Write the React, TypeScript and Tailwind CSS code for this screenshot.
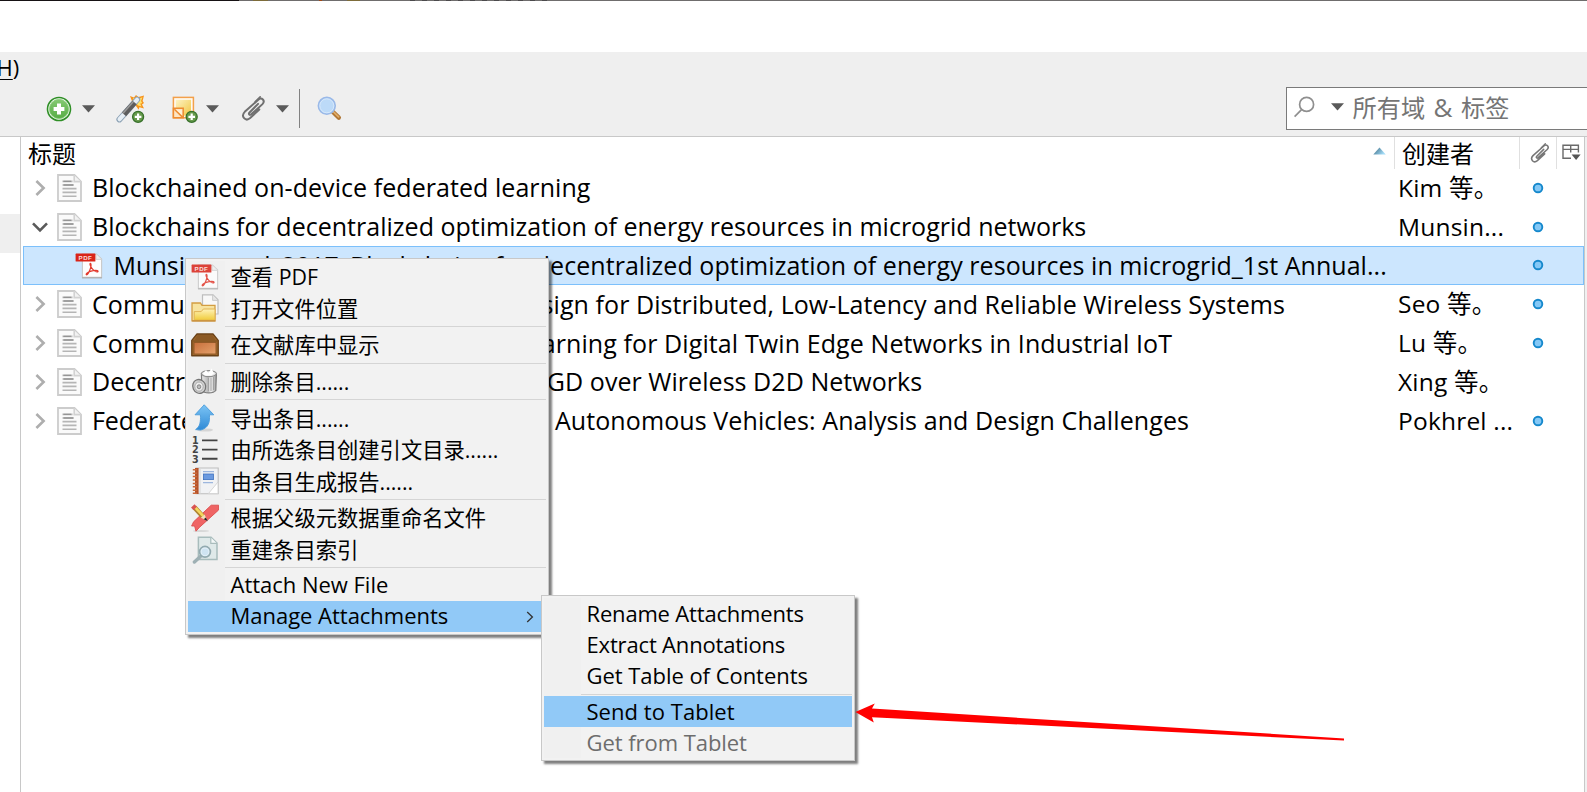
import React from 'react';

const latin = "font-['Open_Sans','Noto_Sans_CJK_SC',sans-serif]";

function Caret({ className = '' }: { className?: string }) {
  return (
    <svg className={'shrink-0 ' + className} width="13" height="8" viewBox="0 0 13 8">
      <path d="M0 0.3H13L6.5 7.6Z" fill="#5a5a5a" />
    </svg>
  );
}

function PlusBadge() {
  return (
    <g>
      <circle cx="21.5" cy="21.5" r="5.5" fill="#679b4c" stroke="#37702a" strokeWidth="1.3" />
      <path d="M21.5 18.2v6.6M18.2 21.5h6.6" stroke="#fff" strokeWidth="2.2" />
    </g>
  );
}

function AddIcon() {
  return (
    <svg width="26" height="26" viewBox="0 0 26 26" className="shrink-0">
      <defs>
        <linearGradient id="add" x1="0" y1="0" x2="0" y2="1">
          <stop offset="0" stopColor="#85c973" />
          <stop offset="1" stopColor="#57ad45" />
        </linearGradient>
      </defs>
      <circle cx="13" cy="13" r="11.5" fill="#fff" stroke="#2f8f26" strokeWidth="1.6" />
      <circle cx="13" cy="13" r="9.7" fill="url(#add)" stroke="#8dcf7e" strokeWidth="0.8" />
      <path d="M13 7.6v10.8M7.6 13h10.8" stroke="#fff" strokeWidth="4" />
    </svg>
  );
}

function WandIcon() {
  return (
    <svg width="29" height="28" viewBox="0 0 29 28" className="shrink-0">
      <path d="M14 1l4 1.6L20 0l2.4 2L28 .6 26.6 6 28 8l-2 1.4 2 4-4.6-1.2-.8 2.6-2-3-4-4z" fill="#f7941d" />
      <path d="M17 3l3 .6 1.4-1.8 1.6 2 3.4-1.6L25 6l1.2 2-2 .8 1.4 2.8-3.4-1.2-4-4z" fill="#ffe36e" />
      <path d="M3.4 24.4L21.2 4.6" stroke="#8da2b5" strokeWidth="6" strokeLinecap="round" />
      <path d="M3.6 24.2L21 4.8" stroke="#e6eef5" strokeWidth="4.2" strokeLinecap="round" />
      <path d="M8 19.4L18.6 7.5" stroke="#5d5d5d" strokeWidth="5.6" />
      <path d="M7 18.2L17.2 6.8" stroke="#9a9a9a" strokeWidth="1.6" />
      <g transform="translate(.6 .3)"><PlusBadge /></g>
    </svg>
  );
}

function NoteIcon() {
  return (
    <svg width="26" height="28" viewBox="0 0 26 28" className="shrink-0">
      <defs>
        <linearGradient id="note" x1="0" y1="0" x2="1" y2="1">
          <stop offset="0" stopColor="#fdf3c4" />
          <stop offset="1" stopColor="#f1c744" />
        </linearGradient>
      </defs>
      <rect x="1.4" y="2.4" width="20" height="20.4" fill="#fffaf0" stroke="#f3a04a" strokeWidth="1.5" />
      <rect x="3.8" y="4.8" width="15.2" height="15.8" fill="url(#note)" />
      <path d="M1.4 13.2H11.2V22.8H1.4Z" fill="#fde6c4" stroke="#ee8c30" strokeWidth="1.5" />
      <path d="M3.4 15.2L9.8 21.8V15.2Z" fill="#fff4dc" />
      <path d="M2.4 14.2L11 22.6" stroke="#ee8c30" strokeWidth="1.5" />
      <g transform="translate(-1.8 .3)"><PlusBadge /></g>
    </svg>
  );
}

function ClipIcon({ size, color = '#707070' }: { size: number; color?: string }) {
  return (
    <svg width={size} height={size} viewBox="0 0 24 24" className="shrink-0" fill="none" stroke={color} strokeLinecap="round">
      <path
        d="M16.4 7.6L8.2 15.8C6.8 17.4 8.4 18.8 9.8 17.6L20.6 7.8C23.6 4.6 20 .6 16.6 3.6L3.6 15.2C-0.6 19.6 4.4 25 8.8 21.2L17.6 13"
        strokeWidth="1.9"
      />
      <path d="M13.6 5.6L18.4 .9" strokeWidth="1.6" />
    </svg>
  );
}

function MagnifierIcon() {
  return (
    <svg width="25" height="26" viewBox="0 0 25 26" className="shrink-0">
      <path d="M15.5 15.5L21.8 21.6" stroke="#b07634" strokeWidth="4.4" strokeLinecap="round" />
      <path d="M16.5 15.8L21.6 20.8" stroke="#e0ac68" strokeWidth="1.8" strokeLinecap="round" />
      <circle cx="9.8" cy="9.8" r="8.4" fill="#bcdaf8" stroke="#9ab9e8" strokeWidth="1.7" />
      <circle cx="9.8" cy="9.8" r="7" fill="none" stroke="#d6e8fb" strokeWidth="1" />
    </svg>
  );
}

function PageIcon() {
  return (
    <svg width="25" height="28" viewBox="0 0 25 28" className="shrink-0">
      <path d="M1 1H17.5L24 7.5V27H1Z" fill="#fafafa" stroke="#cccccc" strokeWidth="1.8" />
      <path d="M17.2 1.2V7.6H23.8" fill="#f2f2f2" stroke="#d2d2d2" strokeWidth="1.6" />
      <path d="M5.5 7.4H15.5M5.5 11H17M5.5 14.6H19.5M5.5 18.4H19.5M5.5 22.2H19.5" stroke="#b5b5b5" strokeWidth="1.6" />
      <path d="M6.5 7.4H14M6.5 11H16" stroke="#949494" strokeWidth="1.3" />
    </svg>
  );
}

function PdfIcon({ faded = false }: { faded?: boolean }) {
  return (
    <svg width="28" height="27" viewBox="0 0 28 27" className="shrink-0" opacity={faded ? 0.85 : 1}>
      <path d="M7.4 2H21.4L26.6 7V25.4H7.4Z" fill="#fdfdfd" stroke="#c9c9c9" strokeWidth="1.1" />
      <path d="M21 2V7.4H26.6" fill="#eee" stroke="#ccc" strokeWidth="0.8" />
      <path d="M7 25.9H27" stroke="#a5a5a5" strokeWidth="1" />
      <rect x="0.6" y="1.6" width="19.8" height="8" rx="0.6" fill="#d92418" />
      <text x="10.4" y="7.9" textAnchor="middle" fontSize="6.2" fontWeight="700" fill="#fbdcd8" fontFamily="Liberation Sans" letterSpacing="0.4">PDF</text>
      <path
        d="M15.3 11.4C14 12 16.6 16.6 19 18.6C21.2 20.5 23.4 20.1 23 19.1C22.3 17.5 14.4 18.8 11.9 21.2C10.2 22.8 11.8 23.7 13.2 21.4C15.2 18.4 17.2 11.8 15.3 11.4Z"
        fill="none" stroke="#e2392d" strokeWidth="1.2"
      />
    </svg>
  );
}

function FolderIcon() {
  return (
    <svg width="28" height="28" viewBox="0 0 28 28">
      <defs>
        <linearGradient id="fold" x1="0" y1="0" x2="0" y2="1">
          <stop offset="0" stopColor="#fff3b8" />
          <stop offset="1" stopColor="#f0cb3a" />
        </linearGradient>
      </defs>
      <path d="M11.5 .8H22L27 5.8V20H11.5Z" fill="#f8f8f8" stroke="#bdbdbd" strokeWidth="1.2" />
      <path d="M21.6 .8V6.4H27" fill="#e6e6e6" stroke="#c6c6c6" strokeWidth="0.9" />
      <path d="M1 9H9.4L11 11.4H24V26.8H1Z" fill="#f7e3a0" stroke="#d39d42" strokeWidth="1.3" />
      <path d="M3.2 25.6V17.6H10.2L12.4 15H24V26.2H3.2Z" fill="url(#fold)" stroke="#e0b355" strokeWidth="1" />
      <path d="M1.2 26.9H24.4" stroke="#c58a3a" strokeWidth="1.2" />
    </svg>
  );
}

function BoxIcon() {
  return (
    <svg width="28" height="28" viewBox="0 0 28 28">
      <defs>
        <linearGradient id="box" x1="0" y1="0" x2="1" y2="1">
          <stop offset="0" stopColor="#c8703c" />
          <stop offset="1" stopColor="#e5a26c" />
        </linearGradient>
      </defs>
      <path d="M6 3H22L27.2 9.4V24.8H0.8V9.4Z" fill="#a36b2d" stroke="#6b4218" strokeWidth="1.4" strokeLinejoin="round" />
      <path d="M6.6 4H21.4L24.6 9H3.4Z" fill="#8c5a26" />
      <path d="M2 10H26" stroke="#7b4f20" strokeWidth="1.2" />
      <rect x="3" y="11.4" width="22" height="11.6" fill="url(#box)" stroke="#8b5524" strokeWidth="0.9" />
    </svg>
  );
}

function TrashIcon() {
  return (
    <svg width="28" height="28" viewBox="0 0 28 28">
      <defs>
        <linearGradient id="can" x1="0" y1="0" x2="1" y2="0">
          <stop offset="0" stopColor="#ececec" />
          <stop offset="0.4" stopColor="#bdbdbd" />
          <stop offset="0.65" stopColor="#f2f2f2" />
          <stop offset="1" stopColor="#9a9a9a" />
        </linearGradient>
      </defs>
      <path d="M10.4 5.5L11 22.5C13 25.6 22.5 25.6 24.8 22.5L25.4 5.5Z" fill="url(#can)" stroke="#7c7c7c" strokeWidth="1.2" />
      <path d="M20 9.5V23M22.6 9V22M17.4 9.6V23.4" stroke="#999" strokeWidth="0.9" />
      <ellipse cx="17.9" cy="5.6" rx="7.5" ry="3" fill="#eaeaea" stroke="#8d8d8d" strokeWidth="1.1" />
      <path d="M12 5.5L15 2L17.4 5L20.6 .6L23 5.4L20 7.6H14Z" fill="#fff" />
      <ellipse cx="8.2" cy="18.4" rx="6.4" ry="7" fill="#d4d4d4" stroke="#757575" strokeWidth="1.3" transform="rotate(-24 8.2 18.4)" />
      <ellipse cx="8" cy="18.6" rx="4.2" ry="4.6" fill="#ececec" stroke="#a2a2a2" strokeWidth="0.9" />
      <ellipse cx="8" cy="18.8" rx="1.8" ry="2" fill="#bdbdbd" stroke="#808080" strokeWidth="0.9" />
    </svg>
  );
}

function ExportIcon() {
  return (
    <svg width="28" height="28" viewBox="0 0 28 28">
      <defs>
        <linearGradient id="exp" x1="0" y1="0" x2="0" y2="1">
          <stop offset="0" stopColor="#7cc4f5" />
          <stop offset="1" stopColor="#2f8ad6" />
        </linearGradient>
      </defs>
      <ellipse cx="14" cy="26" rx="8" ry="1.6" fill="#d5d5d5" />
      <path d="M13.2 .8L22.8 10.8H18.4C19 18 17.6 24 9.8 26L4.6 25.6C9 22.6 9.8 18 9.4 10.8H4Z" fill="url(#exp)" stroke="#4b9cdb" strokeWidth="0.9" strokeLinejoin="round" />
    </svg>
  );
}

function NumberedIcon() {
  return (
    <svg width="28" height="28" viewBox="0 0 28 28">
      <path d="M11 4.4H26.5M11 13.6H26.5M11 22.8H26.5" stroke="#444" strokeWidth="1.9" />
      <g fontFamily="DejaVu Sans" fontWeight="700" fontSize="9.6" fill="#444">
        <text x="1" y="8">1</text>
        <text x="1" y="17.4">2</text>
        <text x="1" y="26.8">3</text>
      </g>
    </svg>
  );
}

function ReportIcon() {
  return (
    <svg width="28" height="28" viewBox="0 0 28 28">
      <path d="M5 1H27.2V26.8H5Z" fill="#f1f2f4" stroke="#bdbdbd" strokeWidth="1.1" />
      <rect x="4" y="1" width="3.6" height="26" fill="#b5522a" />
      <path d="M1.8 2.8H6M1.8 6.2H6M1.8 9.6H6M1.8 13H6M1.8 16.4H6M1.8 19.8H6M1.8 23.2H6M1.8 26.2H6" stroke="#c9693a" strokeWidth="1.5" />
      <path d="M9 1.4V26.6" stroke="#d9d9d9" strokeWidth="1.2" />
      <rect x="12.4" y="7" width="10" height="5.6" fill="#6b9ae0" stroke="#3f72c0" strokeWidth="0.8" />
      <path d="M12 15.6H22M12 4.6H23" stroke="#9db6dd" strokeWidth="1.2" />
      <path d="M27 15L17.4 26.6H27Z" fill="#fff" stroke="#d2d2d2" strokeWidth="0.9" />
    </svg>
  );
}

function RenameIcon() {
  return (
    <svg width="28" height="28" viewBox="0 0 28 28">
      <ellipse cx="10" cy="27" rx="8" ry="1" fill="#d8d8d8" />
      <path d="M20.2 1.2H27.6V6L8.4 23.4L5 27.2L3.6 22H.6L2.6 17.8Z" fill="#ef6464" stroke="#dc4e4e" strokeWidth="0.9" strokeLinejoin="round" />
      <path d="M3.4 3.4L11.8 12.4" stroke="#b08430" strokeWidth="5" />
      <path d="M3.8 3L12.2 12" stroke="#f4d75e" strokeWidth="2.6" />
      <path d="M1.8 1.8L4.2 4.4" stroke="#d95353" strokeWidth="4.8" />
      <path d="M13.6 10.4L9.8 13.8L16.4 16.8Z" fill="#f1dfb8" />
      <path d="M14.8 13.6L12.8 15.2L16.8 17.2Z" fill="#222" />
    </svg>
  );
}

function ReindexIcon() {
  return (
    <svg width="28" height="28" viewBox="0 0 28 28">
      <path d="M7.4 1.2H20L26 7V23.4H7.4Z" fill="#dfe9e9" stroke="#a8bcbc" strokeWidth="1.5" />
      <path d="M19.8 1.4V7.4H26" fill="#f4f8f8" stroke="#a9bcbc" strokeWidth="1.2" />
      <path d="M9.4 20.4L3.4 26" stroke="#9eb0b4" strokeWidth="3.4" strokeLinecap="round" />
      <circle cx="14" cy="15.8" r="5.4" fill="#e3f0f8" stroke="#92aab0" strokeWidth="1.7" />
      <circle cx="14" cy="15.8" r="3.4" fill="#cfe4f2" />
    </svg>
  );
}

function Dot() {
  return (
    <svg width="12" height="12" viewBox="0 0 12 12">
      <circle cx="6" cy="6" r="4.3" fill="#84c8f6" stroke="#1588cc" strokeWidth="1.9" />
    </svg>
  );
}

type Row = { title: string; rest?: string; creator: string; dot: boolean; tracking: string; open?: boolean; child?: boolean };

const rows: Row[] = [
  { title: 'Blockchained on-device federated learning', creator: 'Kim 等。', dot: true, tracking: 'tracking-[0.06px]' },
  { title: 'Blockchains for decentralized optimization of energy resources in microgrid networks', creator: 'Munsin...', dot: true, tracking: 'tracking-[0.02px]', open: true },
  { title: 'Munsing et al_2017_Blockchains for decentralized optimization of energy resources in microgrid_1st Annual...', creator: '', dot: true, tracking: 'tracking-[0.05px]', child: true },
  { title: 'Communication and Consensus Co-Design for Distributed, Low-Latency and Reliable Wireless Systems', creator: 'Seo 等。', dot: true, tracking: 'tracking-[0.075px]' },
  { title: 'Communication-Efficient Federated Learning for Digital Twin Edge Networks in Industrial IoT', creator: 'Lu 等。', dot: true, tracking: 'tracking-[0.105px]' },
  { title: 'Decentralized Federated Learning via SGD over Wireless D2D Networks', creator: 'Xing 等。', dot: false, tracking: 'tracking-[0.05px]' },
  { title: 'Federated Learning With Blockchain for ', rest: 'Autonomous Vehicles: Analysis and Design Challenges', creator: 'Pokhrel ...', dot: true, tracking: 'tracking-[-0.07px]' },
];

function TreeRow({ row }: { row: Row }) {
  return (
    <div className={'ml-[2px] flex h-[38.8px] items-center border ' + (row.child ? 'border-[#7cc0fb] bg-[#cce6fe]' : 'border-transparent')}>
      <div className={'flex w-[1374px] items-center ' + (row.child ? 'pl-[51px]' : 'pl-[7.5px]')}>
        {!row.child && (
          <svg width="16" height="16" viewBox="0 0 16 16" className="mr-[9px] shrink-0" fill="none" strokeWidth="2.6">
            {row.open ? <path d="M1 4.4L8 11.4L15 4.4" stroke="#5a5a5a" /> : <path d="M4.4 1L11.6 8L4.4 15" stroke="#aeaeae" />}
          </svg>
        )}
        {row.child ? <PdfIcon /> : <PageIcon />}
        <span className={'ml-[10.5px] whitespace-pre pb-px text-[25px] leading-[36px] ' + row.tracking}>
          {row.title}
          {row.rest && <span className="tracking-[0.1px]">{row.rest}</span>}
        </span>
      </div>
      <span className="w-[134px] whitespace-pre text-[24.5px] leading-[36px] tracking-[0.2px]">{row.creator}</span>
      {row.dot && <Dot />}
    </div>
  );
}

type Entry = { label: string; icon?: React.ReactNode; latin?: boolean; active?: boolean; arrow?: boolean } | null;

const menu: Entry[] = [
  { label: '查看 PDF', icon: <PdfIcon faded /> },
  { label: '打开文件位置', icon: <FolderIcon /> },
  null,
  { label: '在文献库中显示', icon: <BoxIcon /> },
  null,
  { label: '删除条目......', icon: <TrashIcon /> },
  null,
  { label: '导出条目......', icon: <ExportIcon /> },
  { label: '由所选条目创建引文目录......', icon: <NumberedIcon /> },
  { label: '由条目生成报告......', icon: <ReportIcon /> },
  null,
  { label: '根据父级元数据重命名文件', icon: <RenameIcon /> },
  { label: '重建条目索引', icon: <ReindexIcon /> },
  null,
  { label: 'Attach New File', latin: true },
  { label: 'Manage Attachments', latin: true, active: true, arrow: true },
];

function ContextMenu() {
  return (
    <div className="absolute left-[185px] top-[258px] w-[364px] border border-[#c8c8c8] bg-[#f2f2f2] px-[2px] pb-[2px] pt-[2px] shadow-[3px_3px_2px_0_rgba(0,0,0,0.5)]">
      <div className="bg-[linear-gradient(to_right,#f0f0f0_37px,#f2f2f2_37px)]">
        {menu.map((m, i) =>
          m === null ? (
            <div key={i} className="ml-[37px] flex h-[5px] items-center">
              <div className="h-px w-[321px] bg-[#d5d5d5]" />
            </div>
          ) : (
            <div key={i} className={'flex items-center ' + (m.latin ? 'h-[31px] ' : 'h-[31.6px] ') + (m.active ? 'bg-[#91c9f7]' : '')}>
              <div className="flex w-[42.5px] shrink-0 pl-[3px]">{m.icon}</div>
              <span className={'flex-1 whitespace-pre ' + (m.latin ? 'pb-[3px] text-[22px] leading-[28px] tracking-[-0.02px]' : 'text-[21.3px] leading-[31px]')}>{m.label}</span>
              {m.arrow && (
                <svg width="8" height="12" viewBox="0 0 8 12" className="mr-[12px]" fill="none" stroke="#333" strokeWidth="1.3">
                  <path d="M1.2 1L6.4 6L1.2 11" />
                </svg>
              )}
            </div>
          ),
        )}
      </div>
    </div>
  );
}

function SubMenu() {
  const item = 'flex h-[31px] items-center whitespace-pre pl-[42.5px] text-[22px] leading-[28px] ';
  return (
    <div className="absolute left-[541px] top-[595px] w-[314px] border border-[#c8c8c8] bg-[#f2f2f2] p-[2px] shadow-[3px_3px_2px_0_rgba(0,0,0,0.5)]">
      <div className="bg-[linear-gradient(to_right,#f0f0f0_37px,#f2f2f2_37px)] pt-px">
        <div className={item + 'pb-[3px] tracking-[-0.18px]'}>Rename Attachments</div>
        <div className={item + 'pb-[3px] tracking-[-0.16px]'}>Extract Annotations</div>
        <div className={item + 'pb-[3px] tracking-[-0.04px]'}>Get Table of Contents</div>
        <div className="ml-[37px] flex h-[4px] items-center">
          <div className="h-px w-full bg-[#d5d5d5]" />
        </div>
        <div className={item + 'bg-[#91c9f7] pb-px tracking-[0.05px]'}>Send to Tablet</div>
        <div className={item + 'pb-px tracking-[-0.05px] text-[#6d6d6d]'}>Get from Tablet</div>
      </div>
    </div>
  );
}

export default function App() {
  return (
    <div className={'relative flex h-[792px] w-[1587px] flex-col overflow-hidden bg-white text-black ' + latin}>
      <div className="flex h-px shrink-0 bg-[#6f6d6d]">
        <div className="w-[239px] bg-[#161214]" />
        <div className="ml-[14px] w-[15px] bg-[#7d6c3a]" />
        <div className="ml-[51px] w-[3px] bg-[#a04818]" />
        <div className="ml-[25px] w-[13px] bg-[#7d6c3a]" />
        <div className="ml-[50px] w-[140px] bg-[repeating-linear-gradient(to_right,#4c4a4c_0_5px,#6f6d6d_5px_12px)]" />
      </div>
      <div className="h-[51px] shrink-0" />
      <header className="flex h-[85px] shrink-0 flex-col border-b border-[#c8c8c8] bg-[#efefef]">
        <div className="flex h-[32px] items-center">
          <span className="-ml-[3.5px] whitespace-pre pb-[2px] text-[22px] leading-[30px]">
            <span className="underline decoration-1 underline-offset-[3px]">H</span>)
          </span>
        </div>
        <div className="flex h-[49px] items-center">
          <div className="flex w-[299px] items-center pl-[46px]">
            <AddIcon />
            <Caret className="ml-[10px]" />
            <div className="ml-[20.5px]"><WandIcon /></div>
            <div className="ml-[27px]"><NoteIcon /></div>
            <Caret className="ml-[8px]" />
            <div className="ml-[22px]"><ClipIcon size={25} /></div>
            <Caret className="ml-[10.5px]" />
          </div>
          <div className="h-[39px] w-px bg-[#828282]" />
          <div className="ml-[17px]"><MagnifierIcon /></div>
          <div className="ml-auto flex h-[43px] w-[301px] items-center border border-r-0 border-[#7a7a7a] bg-white pl-[7px]">
            <svg width="21" height="22" viewBox="0 0 21 22" fill="none" stroke="#8f8f8f" strokeWidth="1.7" className="mb-[3px] shrink-0">
              <circle cx="12.6" cy="8.4" r="7" />
              <path d="M7.8 13.4L0.6 20.6" />
            </svg>
            <Caret className="mb-[4px] ml-[16px]" />
            <span className="ml-[8.5px] whitespace-pre pb-[2px] text-[24.2px] leading-[36px] text-[#757575]">
              所有域<span className="px-[8.5px] text-[26px]">&amp;</span>标签
            </span>
          </div>
        </div>
      </header>
      <div className="flex flex-1">
        <aside className="w-[21px] shrink-0 border-r border-[#c8c8c8] pt-[77px]">
          <div className="h-[39px] bg-[#efefef]" />
        </aside>
        <main className="w-[1564px] border-r border-[#c8c8c8]">
          <div className="flex h-[31.5px] items-start text-[24px]">
            <div className="flex h-full w-[1373px] items-center justify-between pl-[7px] pr-[8px]">
              <span className="pt-[2px] leading-[32px]">标题</span>
              <svg width="13" height="8" viewBox="0 0 13 8" className="mb-[3px]">
                <defs>
                  <linearGradient id="sort" x1="0" y1="0" x2="1" y2="0.5">
                    <stop offset="0" stopColor="#35647c" />
                    <stop offset="1" stopColor="#a3dcf8" />
                  </linearGradient>
                </defs>
                <path d="M0.3 7.6L6.5 0.4L12.7 7.6Z" fill="url(#sort)" />
              </svg>
            </div>
            <div className="flex h-full w-[125px] items-center border-l border-[#e0e0e0] pl-[7px]">
              <span className="pt-[2px] leading-[32px]">创建者</span>
            </div>
            <div className="flex h-full w-[37px] items-center border-l border-[#e0e0e0] pl-[9.5px]">
              <ClipIcon size={20} color="#777" />
            </div>
            <div className="flex h-full flex-1 items-center border-l border-[#e0e0e0] pl-[5px]">
              <svg width="19" height="17" viewBox="0 0 19 17" fill="none" stroke="#6a6a6a" strokeWidth="1.4">
                <path d="M9 14.2H1V1.2H16.4V8.6M1 5.4H16.4M8.7 1.2V8.4" />
                <path d="M9.6 10.6H18.6L14.1 16Z" fill="#555" stroke="none" />
              </svg>
            </div>
          </div>
          {rows.map((r) => (
            <TreeRow key={r.title} row={r} />
          ))}
        </main>
        <div className="flex-1 bg-[#f0f0f0]" />
      </div>
      <ContextMenu />
      <SubMenu />
      <svg className="absolute left-[854px] top-[698px]" width="492" height="44" viewBox="0 0 492 44">
        <path d="M1.4 14L20.8 5.4L18 10.6L490 40.4V42.6L18 19.2L19.8 24.4Z" fill="#f00" />
      </svg>
    </div>
  );
}
